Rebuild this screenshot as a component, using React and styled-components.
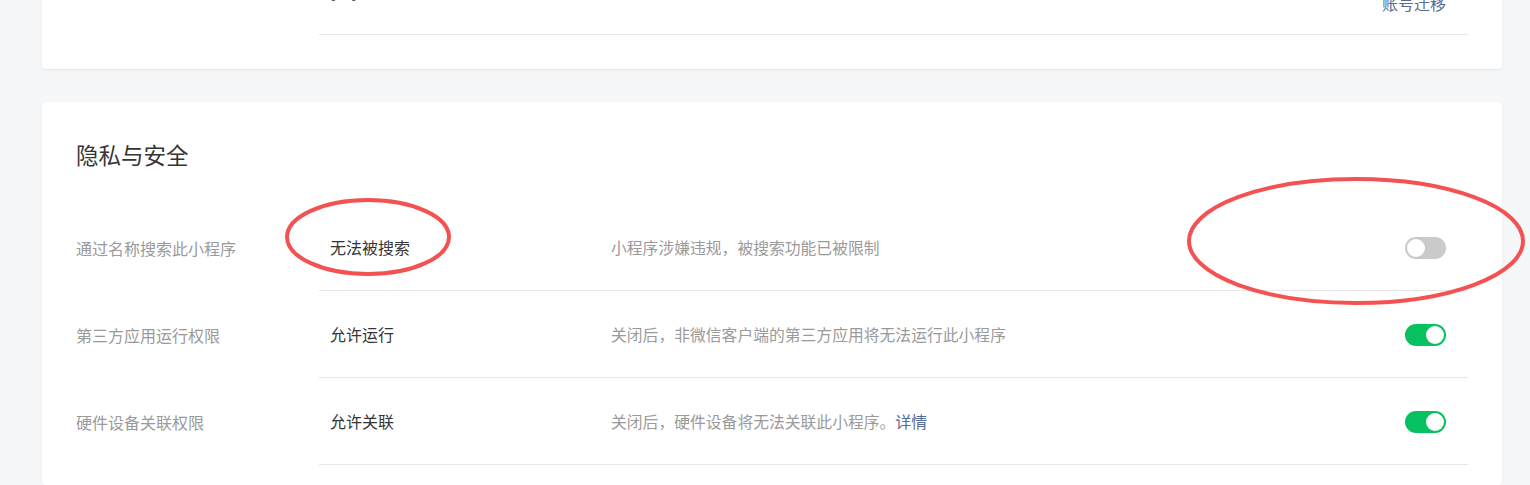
import React from "react";
import styled, { createGlobalStyle } from "styled-components";

const Global = createGlobalStyle`
  html, body { margin: 0; padding: 0; background: #f6f7f9; }
  body { font-family: "Noto Sans CJK SC", "Noto Sans", sans-serif; }
`;

const Page = styled.div`
  position: relative;
  height: 485px;
  overflow: hidden;
  padding: 0 28px 0 42px;
  box-sizing: border-box;
`;

const Card = styled.section`
  background: #fff;
  border-radius: 4px;
  box-shadow: 0 1px 2px rgba(0, 0, 0, 0.08);
  padding: ${(p) => p.$pad};
  margin-top: ${(p) => p.$top};
`;

const Title = styled.h2`
  margin: 0 0 34px;
  font-size: 22.5px;
  line-height: 32px;
  font-weight: 400;
  color: #353535;
`;

const Row = styled.div`
  display: grid;
  grid-template-columns: 243px 1fr;
  align-items: stretch;
`;

const Label = styled.div`
  display: flex;
  align-items: ${(p) => (p.$top ? "flex-start" : "center")};
  font-size: 16px;
  color: #9a9a9a;
  line-height: 24px;
`;

const Body = styled.div`
  display: flex;
  align-items: center;
  min-height: 86px;
  border-bottom: 1px solid #e7e7eb;
  padding: 0 22px 0 11px;
`;

const Value = styled.div`
  width: 281px;
  flex-shrink: 0;
  font-size: 16px;
  color: #353535;
  transform: translateY(${(p) => p.$shift || 0});
`;

const Desc = styled.div`
  flex: 1;
  font-size: 15.8px;
  color: #9a9a9a;
`;

const Link = styled.a`
  color: #576b95;
  text-decoration: none;
  font-size: 16px;
  cursor: pointer;
`;

const Actions = styled.div`
  display: flex;
  flex-direction: column;
  align-items: flex-end;
  line-height: 24px;
`;

const Track = styled.span`
  position: relative;
  display: inline-block;
  width: 41px;
  height: 22px;
  border-radius: 11px;
  background: ${(p) => (p.$on ? "#07c160" : "#cacaca")};
  flex-shrink: 0;
  transform: translateY(1px);
`;

const Knob = styled.span`
  position: absolute;
  top: 2px;
  left: ${(p) => (p.$on ? "21px" : "2px")};
  width: 18px;
  height: 18px;
  border-radius: 50%;
  background: #fff;
`;

const Overlay = styled.svg`
  position: absolute;
  left: 0;
  top: 0;
  pointer-events: none;
`;

function Toggle({ on }) {
  return (
    <Track $on={on}>
      <Knob $on={on} />
    </Track>
  );
}

const rows = [
  {
    label: "通过名称搜索此小程序",
    value: "无法被搜索",
    desc: "小程序涉嫌违规，被搜索功能已被限制",
    on: false,
  },
  {
    label: "第三方应用运行权限",
    value: "允许运行",
    desc: "关闭后，非微信客户端的第三方应用将无法运行此小程序",
    on: true,
  },
  {
    label: "硬件设备关联权限",
    value: "允许关联",
    desc: "关闭后，硬件设备将无法关联此小程序。",
    link: "详情",
    on: true,
  },
];

export default function App() {
  return (
    <>
      <Global />
      <Page>
        <Card $pad="0 34px 34px" $top="-52px">
          <Row>
            <Label $top>账号信息</Label>
            <Body>
              <Value $shift="0px">[已]</Value>
              <Desc />
              <Actions>
                <Link>修改</Link>
                <Link>账号迁移</Link>
              </Actions>
            </Body>
          </Row>
        </Card>
        <Card $pad="36px 34px 20px" $top="33px">
          <Title>隐私与安全</Title>
          {rows.map((r) => (
            <Row key={r.label}>
              <Label>{r.label}</Label>
              <Body>
                <Value>{r.value}</Value>
                <Desc>
                  {r.desc}
                  {r.link && <Link>{r.link}</Link>}
                </Desc>
                <Toggle on={r.on} />
              </Body>
            </Row>
          ))}
        </Card>
        <Overlay width="1530" height="485" viewBox="0 0 1530 485">
          <ellipse cx="368" cy="237" rx="81" ry="37" fill="none" stroke="#f45252" strokeWidth="4" />
          <ellipse cx="1356" cy="241" rx="167" ry="62" fill="none" stroke="#f45252" strokeWidth="4" />
        </Overlay>
      </Page>
    </>
  );
}
